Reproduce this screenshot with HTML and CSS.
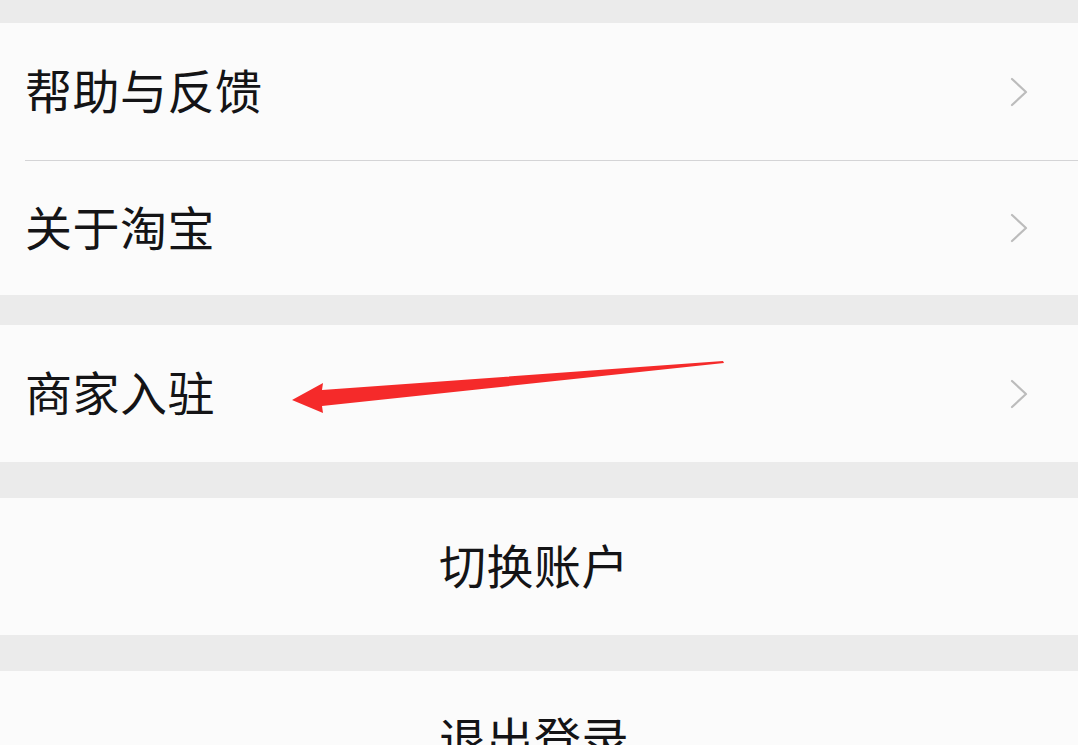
FILE: index.html
```html
<!DOCTYPE html>
<html lang="zh-CN">
<head>
<meta charset="utf-8">
<title>设置</title>
<link rel="stylesheet" href="styles.css">
</head>
<body>
<div class="page">
  <section class="group">
    <div class="item item-first">
      <span class="label">帮助与反馈</span>
      <svg class="chev" viewBox="0 0 18 30" width="18" height="30"><path d="M2 2 L16 15 L2 28" fill="none" stroke="#bcbcbc" stroke-width="2.2" stroke-linecap="round" stroke-linejoin="round"/></svg>
    </div>
    <div class="item item-second">
      <span class="label">关于淘宝</span>
      <svg class="chev" viewBox="0 0 18 30" width="18" height="30"><path d="M2 2 L16 15 L2 28" fill="none" stroke="#bcbcbc" stroke-width="2.2" stroke-linecap="round" stroke-linejoin="round"/></svg>
    </div>
  </section>
  <section class="group group-merchant">
    <div class="item">
      <span class="label">商家入驻</span>
      <svg class="chev" viewBox="0 0 18 30" width="18" height="30"><path d="M2 2 L16 15 L2 28" fill="none" stroke="#bcbcbc" stroke-width="2.2" stroke-linecap="round" stroke-linejoin="round"/></svg>
    </div>
    <svg class="pointer" viewBox="0 0 440 62" width="440" height="62"><path d="M0 45 L31 28 L30 35 L431 6 L432 8 L30 51 L31 58 Z" fill="#f52a2a"/></svg>
  </section>
  <section class="group">
    <div class="item item-center"><span class="label">切换账户</span></div>
  </section>
  <section class="group">
    <div class="item item-center"><span class="label">退出登录</span></div>
  </section>
</div>
</body>
</html>
```

FILE: styles.css
```css
html, body {
  margin: 0;
  padding: 0;
  background: #ebebeb;
}

body {
  font-family: "Noto Sans CJK SC", "Noto Sans", sans-serif;
  color: #141416;
  overflow: hidden;
}

.page {
  padding-top: 23px;
  display: flex;
  flex-direction: column;
  gap: 36px;
}

.group {
  background: #fbfbfb;
  position: relative;
}

.group-merchant {
  margin-top: -6px;
}

.item {
  height: 137px;
  margin-left: 25px;
  padding-right: 50px;
  display: flex;
  align-items: center;
  justify-content: space-between;
  box-sizing: border-box;
}

.item-first {
  border-bottom: 1px solid #d4d4d6;
  height: 138px;
}

.item-second {
  height: 134px;
}

.item-center {
  margin-left: 0;
  padding-right: 10px;
  justify-content: center;
}

.label {
  font-size: 47px;
  line-height: 1;
  font-weight: 400;
  letter-spacing: 0.5px;
  position: relative;
  top: -3px;
}

.chev {
  display: block;
}

.pointer {
  position: absolute;
  left: 292px;
  top: 30px;
}
```
